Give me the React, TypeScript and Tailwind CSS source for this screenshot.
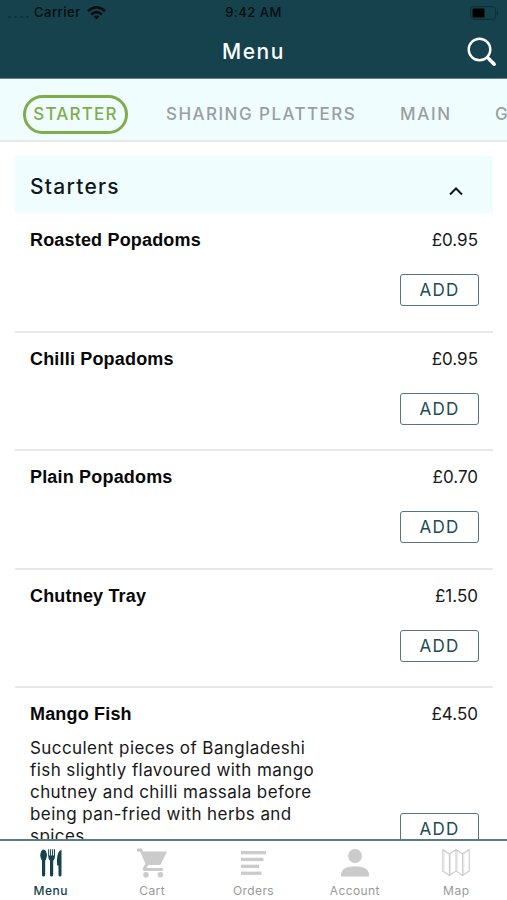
import type { ReactNode } from "react";

interface MenuItem {
  name: string;
  price: string;
  description?: string[];
}

interface NavItem {
  label: string;
  icon: ReactNode;
  labelClass: string;
}

const ITEMS: MenuItem[] = [
  { name: "Roasted Popadoms", price: "£0.95" },
  { name: "Chilli Popadoms", price: "£0.95" },
  { name: "Plain Popadoms", price: "£0.70" },
  { name: "Chutney Tray", price: "£1.50" },
  {
    name: "Mango Fish",
    price: "£4.50",
    description: [
      "Succulent pieces of Bangladeshi",
      "fish slightly flavoured with mango",
      "chutney and chilli massala before",
      "being pan-fried with herbs and",
      "spices",
    ],
  },
];

function CutleryIcon() {
  return (
    <svg width="22" height="30" viewBox="0 0 22 30" fill="#15424d">
      <ellipse cx="3.600" cy="7.300" rx="3.300" ry="5.800" />
      <rect x="2" y="10" width="3.200" height="18.500" rx="1.600" />
      <path d="M8.200 7.500h6.800q0 4-1.800 5.200v14.200a1.600 1.600 0 0 1-3.200 0V12.700q-1.800-1.200-1.800-5.200z" />
      <path d="M8.700 1.300v7M10.600 1.300v7M12.600 1.300v7M14.500 1.300v7" stroke="#15424d" strokeWidth="1" />
      <path d="M21.500 1.500v25.500a1.500 1.500 0 0 1-3 0V17.500h-1.300q-.8-8 1-12.500 1-2.500 3.300-3.500z" />
    </svg>
  );
}

function CartIcon() {
  return (
    <svg width="30" height="30" viewBox="0 0 30 30" fill="#cbcbcb">
      <path d="M0 .5h4.800L6.200 3.500H30L24.200 15.500q-.7 1.500-2.400 1.500H11.400L9.700 20h16.100v3H8.500q-3.800 0-2.300-3.600l2.200-4L3 3.500H0z" />
      <circle cx="9" cy="26.800" r="2.800" />
      <circle cx="23.400" cy="26.800" r="2.800" />
    </svg>
  );
}

function OrdersIcon() {
  return (
    <svg width="25" height="30" viewBox="0 0 25 30" fill="#cbcbcb">
      <rect y="3" width="25" height="3.300" />
      <rect y="9.800" width="22.500" height="3.300" />
      <rect y="16.700" width="18" height="3.300" />
      <rect y="23.600" width="20.500" height="3.300" />
    </svg>
  );
}

function AccountIcon() {
  return (
    <svg width="28" height="30" viewBox="0 0 28 30" fill="#cbcbcb">
      <circle cx="14" cy="8" r="6.900" />
      <path d="M0 28.500v-3.300Q1.500 18.200 14 18.200T28 25.200v3.300z" />
    </svg>
  );
}

function MapIcon() {
  return (
    <svg width="28" height="30" viewBox="0 0 28 30" fill="none" stroke="#cbcbcb" strokeWidth="1.100" strokeLinejoin="round">
      <path d="M.8 1.500 7.400 6 14 1.500 20.600 6l6.600-4.500v21.500l-6.600 4.500-6.600-4.500-6.600 4.500L.8 23zM7.400 6v21.500M14 1.500V23M20.600 6v21.500" />
      <path d="M2 3v19.500M8.600 6v20M15.200 3v20M21.800 6v20" strokeWidth=".5" />
    </svg>
  );
}

const NAV: NavItem[] = [
  { label: "Menu", icon: <CutleryIcon />, labelClass: "text-[#15424d] font-medium tracking-[0.500px]" },
  { label: "Cart", icon: <CartIcon />, labelClass: "text-[#999999] tracking-[0.4px]" },
  { label: "Orders", icon: <OrdersIcon />, labelClass: "text-[#999999] tracking-[0.4px]" },
  { label: "Account", icon: <AccountIcon />, labelClass: "text-[#999999] tracking-[0.4px]" },
  { label: "Map", icon: <MapIcon />, labelClass: "text-[#999999] tracking-[0.500px]" },
];

function StatusBar() {
  return (
    <div className="grid grid-cols-3 items-center h-[26px] pl-2 pr-2 text-[13px] font-medium text-[#030c0f] tracking-[0.500px]">
      <div className="flex items-center">
        <span className="flex gap-[3px] w-[26px] pt-[8px]">
          {[0, 1, 2, 3].map((dot) => (
            <i key={dot} className="w-[3px] h-[2px] rounded-full bg-[#0e323b]" />
          ))}
        </span>
        <span>Carrier</span>
        <svg className="ml-[6px]" width="19" height="14" viewBox="0 0 19 14" fill="none" stroke="#030c0f" strokeWidth="2.500">
          <path d="M1 5.200Q9.500-2.600 18 5.200M4.200 8.500Q9.500 3.700 14.800 8.500" />
          <path d="m6.700 10.600 2.800 2.900 2.800-2.900q-2.800-2.400-5.600 0z" fill="#030c0f" stroke="none" />
        </svg>
      </div>
      <span className="text-center">9:42 AM</span>
      <svg className="justify-self-end" width="29" height="14" viewBox="0 0 29 14">
        <rect x=".7" y=".7" width="25" height="12.600" rx="3" fill="none" stroke="#0c2e37" />
        <rect x="2.500" y="2.500" width="12" height="9" rx="1" fill="#000" />
        <path d="M27 4.500q2.200 2.500 0 5z" fill="#0c2e37" />
      </svg>
    </div>
  );
}

function Header() {
  return (
    <header className="h-[79px] shrink-0 bg-[#15424d] border-b border-[#5f8591]">
      <StatusBar />
      <div className="grid grid-cols-3 items-center h-[52px] pr-[10px]">
        <span />
        <h1 className="text-center text-[21px] font-medium text-white tracking-[1.5px] pl-[10px]">Menu</h1>
        <svg className="justify-self-end" width="30" height="30" viewBox="0 0 30 30" fill="none" stroke="#fff">
          <circle cx="12.500" cy="12.500" r="10.800" strokeWidth="2.400" />
          <path d="m20.500 20.500 2 2" strokeWidth="2.400" />
          <path d="m22 22 5.200 5.200" strokeWidth="3.600" strokeLinecap="round" />
        </svg>
      </div>
    </header>
  );
}

function CategoryTabs() {
  return (
    <nav className="flex items-center h-[63px] shrink-0 pt-[9px] pl-[23px] bg-[#f0fdff] border-b-2 border-[#eae8e6] text-[17px] font-medium text-[#999f9f] whitespace-nowrap overflow-hidden">
      <span className="flex items-center justify-center w-[105px] h-[39px] pt-[2px] shrink-0 rounded-full border-3 border-[#80ad4c] text-[#80ad4c] tracking-[1.2px]">
        STARTER
      </span>
      <span className="ml-[38px] w-[234px] pt-[2px] shrink-0 tracking-[1.450px]">SHARING PLATTERS</span>
      <span className="w-[95px] pt-[2px] shrink-0 tracking-[1.700px]">MAIN</span>
      <span className="pt-[2px] shrink-0">GRILL</span>
    </nav>
  );
}

function ItemRow({ item }: { item: MenuItem }) {
  return (
    <li className="flex justify-between shrink-0 min-h-[118.500px] pl-[15px] pr-[14px] border-b-2 border-[#e8e8e8]">
      <div className="pt-[14px]">
        <h3 className="font-['Liberation_Sans',sans-serif] text-[18px] leading-6 font-bold text-[#080808] tracking-[0.180px]">
          {item.name}
        </h3>
        {item.description && (
          <p className="mt-[11px] text-[17px] leading-[22px] tracking-[0.420px] text-[#181818] whitespace-nowrap">
            {item.description.map((line) => (
              <span key={line} className="block">{line}</span>
            ))}
          </p>
        )}
      </div>
      <div className="flex flex-col items-end pt-[14px]">
        <span className="text-[17px] leading-6 text-[#181818] pr-px">{item.price}</span>
        <button className={`w-[79px] h-[32px] pt-px rounded-[3px] border-[1.5px] border-[#55747f] text-[17px] leading-none text-[#214b55] tracking-[1.200px] ${item.description ? "mt-[87px]" : "mt-[22px]"}`}>
          ADD
        </button>
      </div>
    </li>
  );
}

export default function App() {
  return (
    <div className="flex flex-col w-[507px] h-[900px] overflow-hidden bg-white font-['Inter',sans-serif]">
      <Header />
      <CategoryTabs />
      <main className="flex flex-col flex-1 min-h-0 overflow-hidden pt-[14px] pl-[15px] pr-[14px]">
        <div className="flex items-center justify-between h-[57px] shrink-0 pl-[15px] pr-[30px] bg-[#f0fdff]">
          <h2 className="text-[21px] font-medium text-[#10171a] tracking-[1.250px] pt-[4px]">Starters</h2>
          <svg className="mt-[13px]" width="14" height="9" viewBox="0 0 14 9" fill="none" stroke="#10171a" strokeWidth="2">
            <path d="m1 7.500 6-6 6 6" />
          </svg>
        </div>
        <ul className="flex flex-col pt-[1.400px]">
          {ITEMS.map((item) => (
            <ItemRow key={item.name} item={item} />
          ))}
        </ul>
      </main>
      <nav className="grid grid-cols-5 h-[61px] shrink-0 pt-[7px] bg-white border-t-2 border-[#5d7b84]">
        {NAV.map(({ label, icon, labelClass }) => (
          <div key={label} className="flex flex-col items-center">
            {icon}
            <span className={`mt-[5px] text-[12px] leading-4 ${labelClass}`}>{label}</span>
          </div>
        ))}
      </nav>
    </div>
  );
}
